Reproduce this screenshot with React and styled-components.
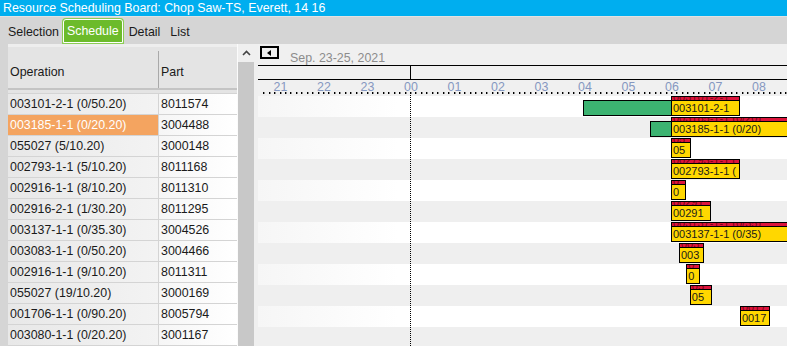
import styled, { createGlobalStyle } from "styled-components";

const HOUR = 43.5; // px per hour on the board
const ORIGIN = 152; // x of 00:00 inside the board

const GlobalStyle = createGlobalStyle`
  html, body {
    margin: 0;
    padding: 0;
    background: #d5d5d5;
  }
  body {
    font-family: "Liberation Sans", Arial, sans-serif;
    font-size: 12.4px;
    color: #1a1a1a;
    overflow: hidden;
  }
`;

const Page = styled.div`
  width: 787px;
  height: 346px;
  display: flex;
  flex-direction: column;
  overflow: hidden;
`;

const TitleBar = styled.div`
  height: 16px;
  line-height: 16px;
  padding-left: 3px;
  background: #00aeef;
  color: #fff;
  white-space: nowrap;
`;

const TabBar = styled.div`
  height: 28px;
  display: flex;
  align-items: flex-end;
  padding-left: 3px;
  background: #d5d5d5;
  border-top: 1px solid #e2e2e2;
  box-sizing: border-box;
`;

const Tab = styled.div`
  height: 24px;
  display: flex;
  align-items: center;
  box-sizing: border-box;
  padding: ${(p) => (p.$active ? "0 3px" : "0 5px")};
  margin: ${(p) => (p.$active ? "0 1px 1px -1px" : "0 0 0 0")};
  background: ${(p) => (p.$active ? "#6cbb2b" : "transparent")};
  color: ${(p) => (p.$active ? "#fff" : "#1a1a1a")};
  border: ${(p) => (p.$active ? "1px solid #fff" : "none")};
  border-radius: 3px 3px 0 0;
  box-shadow: ${(p) => (p.$active ? "0 0 0 1px #8ccc55" : "none")};
`;

const Main = styled.div`
  flex: 1;
  display: flex;
  overflow: hidden;
`;

const Gutter = styled.div`
  width: 8px;
  background: #d5d5d5;
`;

const ListPanel = styled.div`
  width: 229px;
  display: flex;
  flex-direction: column;
`;

const ListHeader = styled.div`
  height: 46px;
  display: grid;
  grid-template-columns: 150px 79px;
  box-sizing: border-box;
  padding-top: 4px;
  background: #e4e4e4;
  border-top: 3px solid #eeeeee;
`;

const HeaderCell = styled.div`
  display: flex;
  align-items: center;
  padding: 4px 0 0 2px;
  border-left: ${(p) => (p.$divider ? "1px solid #a9a9a9" : "none")};
`;

const HeaderRule = styled.div`
  height: 6px;
  box-sizing: border-box;
  background: #e4e4e4;
  border-top: 2px solid #c4c4c4;
  border-bottom: 1px solid #d4d4d4;
`;

const ListRow = styled.div`
  height: 21px;
  display: grid;
  grid-template-columns: 150px 79px;
  box-sizing: border-box;
  border-bottom: 1px solid #d4d4d4;
  line-height: 20px;
  white-space: nowrap;
`;

const OpCell = styled.div`
  padding-left: 2px;
  background: ${(p) =>
    p.$selected ? "#f4a460" : "linear-gradient(to right, #e8e8e8, #f3f3f3)"};
  color: ${(p) => (p.$selected ? "#fff" : "#1a1a1a")};
`;

const PartCell = styled.div`
  padding-left: 2px;
  background: linear-gradient(to right, #f6f6f6, #ffffff);
  border-left: 1px solid #d4d4d4;
`;

const ScrollCol = styled.div`
  width: 21px;
  display: flex;
  flex-direction: column;
  box-sizing: border-box;
  background: #efefef;
  border-left: 1px solid #fbfbfb;
`;

const ScrollUp = styled.div`
  width: 16px;
  height: 18px;
  display: flex;
  align-items: center;
  justify-content: center;
`;

const ScrollTrack = styled.div`
  flex: 1;
  width: 16px;
  background: #c8c8c8;
`;

const Board = styled.div`
  flex: 1;
  position: relative;
  overflow: hidden;
  background: #f0f0f0;
`;

const BoardTop = styled.div`
  height: 22px;
  display: flex;
  align-items: flex-start;
  box-sizing: border-box;
  border-bottom: 1px solid #000;
`;

const NavButton = styled.div`
  width: 19px;
  height: 13px;
  margin: 2px 0 0 2px;
  box-sizing: border-box;
  border: 2px solid #000;
  display: flex;
  align-items: center;
  padding-left: 5px;
  &::before {
    content: "";
    border-top: 3.5px solid transparent;
    border-bottom: 3.5px solid transparent;
    border-right: 4px solid #000;
  }
`;

const DateLabel = styled.div`
  margin: 8px 0 0 11px;
  color: #8c8c8c;
  line-height: 12px;
`;

const BoardMid = styled.div`
  height: 14px;
  position: relative;
  box-sizing: border-box;
  border-bottom: 1px solid #000;
`;

const MidnightLine = styled.div`
  position: absolute;
  left: ${ORIGIN}px;
  top: 0;
  bottom: 0;
  width: 1px;
  background: #000;
`;

const Ruler = styled.div`
  height: 16px;
  position: relative;
`;

const HourLabel = styled.span`
  position: absolute;
  top: 1px;
  transform: translateX(-50%);
  color: #8597c0;
  line-height: 12px;
`;

const BoardRow = styled.div`
  height: 21px;
  position: relative;
  background: ${(p) =>
    p.$odd ? "linear-gradient(to right, #f6f6f6, #ffffff 140px)" : "#efefef"};
`;

const DottedLine = styled.div`
  position: absolute;
  left: ${ORIGIN}px;
  top: 49px;
  bottom: 0;
  border-left: 1px dotted #000;
`;

const Bar = styled.div`
  position: absolute;
  top: 0;
  height: 20px;
  display: flex;
  flex-direction: column;
  font-size: 11px;
`;

const Strip = styled.div`
  height: 4px;
  box-sizing: border-box;
  background: #dc143c;
  border: 1px solid #000;
  border-bottom: none;
  overflow: hidden;
  white-space: nowrap;
  & > span {
    display: block;
    margin-top: -6px;
    padding-left: 1px;
    line-height: 12px;
    color: rgba(70, 0, 0, 0.7);
  }
`;

const Body = styled.div`
  height: 16px;
  box-sizing: border-box;
  background: #ffd700;
  border: 1px solid #000;
  padding-left: 1px;
  line-height: 14px;
  overflow: hidden;
  white-space: nowrap;
  color: #1a1a1a;
`;

const Setup = styled.div`
  position: absolute;
  top: 4px;
  height: 16px;
  box-sizing: border-box;
  background: #3cb371;
  border: 1px solid #000;
`;

// label: what fits in the bar (the board clips to whole characters)
const rows = [
  { op: "003101-2-1 (0/50.20)", part: "8011574", label: "003101-2-1", setup: [239, 360], run: [360, 455] },
  { op: "003185-1-1 (0/20.20)", part: "3004488", label: "003185-1-1 (0/20)", setup: [331, 360], run: [360, 560], selected: true },
  { op: "055027 (5/10.20)", part: "3000148", label: "05", run: [360, 388] },
  { op: "002793-1-1 (5/10.20)", part: "8011168", label: "002793-1-1 (", run: [360, 455] },
  { op: "002916-1-1 (8/10.20)", part: "8011310", label: "0", run: [360, 381] },
  { op: "002916-2-1 (1/30.20)", part: "8011295", label: "00291", run: [360, 415] },
  { op: "003137-1-1 (0/35.30)", part: "3004526", label: "003137-1-1 (0/35)", run: [360, 560] },
  { op: "003083-1-1 (0/50.20)", part: "3004466", label: "003", run: [371, 406] },
  { op: "002916-1-1 (9/10.20)", part: "8011311", label: "0", run: [381, 400] },
  { op: "055027 (19/10.20)", part: "3000169", label: "05", run: [386, 417] },
  { op: "001706-1-1 (0/90.20)", part: "8005794", label: "0017", run: [455, 497] },
  { op: "003080-1-1 (0/20.20)", part: "3001167" },
];

const hours = [-3, -2, -1, 0, 1, 2, 3, 4, 5, 6, 7, 8];

const px = (min) => ORIGIN + (min / 60) * HOUR;

const RulerTicks = () => {
  const dots = [];
  for (let k = -28; k <= 72; k++) {
    const x = ORIGIN + (k * HOUR) / 8;
    if (x < 0 || x > 529) continue;
    dots.push(<rect key={k} x={Math.round(x)} y={12} width={1.4} height={2} fill="#000" />);
  }
  return (
    <svg width="529" height="16" style={{ position: "absolute", left: 0, top: 0 }}>
      {dots}
    </svg>
  );
};

const App = () => {
  return (
    <Page>
      <GlobalStyle />
      <TitleBar>Resource Scheduling Board: Chop Saw-TS, Everett, 14 16</TitleBar>
      <TabBar>
        <Tab>Selection</Tab>
        <Tab $active>Schedule</Tab>
        <Tab>Detail</Tab>
        <Tab>List</Tab>
      </TabBar>
      <Main>
        <Gutter />
        <ListPanel>
          <ListHeader>
            <HeaderCell>Operation</HeaderCell>
            <HeaderCell $divider>Part</HeaderCell>
          </ListHeader>
          <HeaderRule />
          {rows.map((r) => (
            <ListRow key={r.op + r.part}>
              <OpCell $selected={r.selected}>{r.op}</OpCell>
              <PartCell>{r.part}</PartCell>
            </ListRow>
          ))}
        </ListPanel>
        <ScrollCol>
          <ScrollUp>
            <svg width="9" height="6" viewBox="0 0 9 6">
              <polyline points="1,5 4.5,1.5 8,5" fill="none" stroke="#444" strokeWidth="1.6" />
            </svg>
          </ScrollUp>
          <ScrollTrack />
        </ScrollCol>
        <Board>
          <BoardTop>
            <NavButton />
            <DateLabel>Sep. 23-25, 2021</DateLabel>
          </BoardTop>
          <BoardMid>
            <MidnightLine />
          </BoardMid>
          <Ruler>
            <RulerTicks />
            {hours.map((h) => (
              <HourLabel key={h} style={{ left: ORIGIN + h * HOUR + 1 }}>
                {String((h + 24) % 24).padStart(2, "0")}
              </HourLabel>
            ))}
          </Ruler>
          {rows.map((r, i) => (
            <BoardRow key={r.op + i} $odd={i % 2 === 0}>
              {r.setup && (
                <Setup
                  style={{
                    left: px(r.setup[0]),
                    width: px(r.setup[1]) - px(r.setup[0]) + 1,
                  }}
                />
              )}
              {r.run && (
                <Bar
                  style={{
                    left: px(r.run[0]),
                    width: px(r.run[1]) - px(r.run[0]),
                  }}
                >
                  <Strip aria-hidden="true">
                    <span>{r.label}</span>
                  </Strip>
                  <Body>{r.label}</Body>
                </Bar>
              )}
            </BoardRow>
          ))}
          <DottedLine />
        </Board>
      </Main>
    </Page>
  );
};

export default App;
